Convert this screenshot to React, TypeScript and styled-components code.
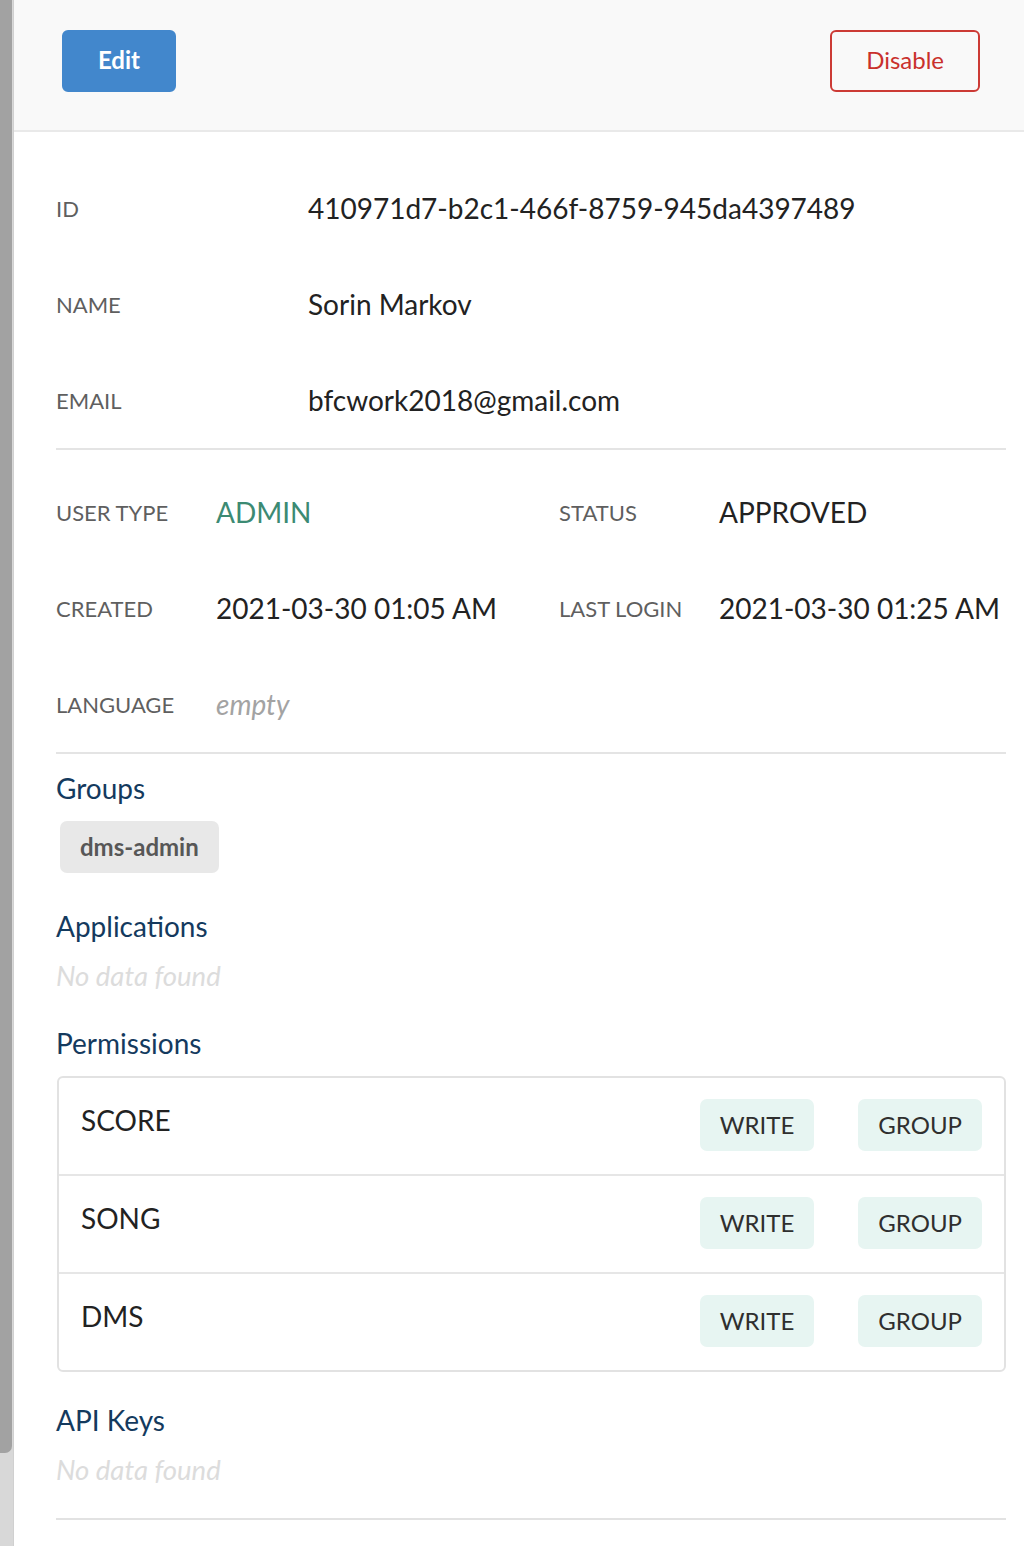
import styled, { createGlobalStyle } from 'styled-components'

const GlobalStyle = createGlobalStyle`
  html, body {
    margin: 0;
    padding: 0;
    background: #ffffff;
    font-family: Lato, "Open Sans", "Liberation Sans", sans-serif;
  }
  * { box-sizing: border-box; }
`

const Page = styled.div`
  display: flex;
  min-height: 1546px;
`

const Track = styled.div`
  position: relative;
  flex: 0 0 14px;
  background: #d8d8d8;
  border-right: 1px solid #d0d0d0;
`

const Thumb = styled.div`
  position: absolute;
  top: 0;
  left: 0;
  width: 12px;
  height: 1453px;
  background: #a2a2a2;
  border-bottom-right-radius: 7px;
`

const Main = styled.div`
  flex: 1;
  min-width: 0;
`

const Toolbar = styled.header`
  display: flex;
  justify-content: space-between;
  align-items: flex-start;
  height: 132px;
  padding: 30px 44px 0 48px;
  background: #f9f9f9;
  border-bottom: 2px solid #e9e9e9;
`

const Button = styled.button<{ $variant: 'primary' | 'danger' }>`
  height: 62px;
  padding: 0 34px 3px;
  border-radius: 6px;
  font-family: inherit;
  font-size: 24px;
  line-height: 1;
  cursor: pointer;
  font-weight: ${({ $variant }) => ($variant === 'primary' ? 700 : 400)};
  background: ${({ $variant }) => ($variant === 'primary' ? '#4287cc' : 'transparent')};
  color: ${({ $variant }) => ($variant === 'primary' ? '#ffffff' : '#c9302c')};
  border: 2px solid ${({ $variant }) => ($variant === 'primary' ? '#4287cc' : '#cc3a35')};
`

const Content = styled.div`
  padding: 0 18px 0 42px;
`

const InfoBlock = styled.section<{ $top: number }>`
  padding-top: ${({ $top }) => $top}px;
  border-bottom: 2px solid #e4e4e4;
`

const MainGrid = styled.div`
  display: grid;
  grid-template-columns: 252px 1fr;
  grid-auto-rows: 96px;
  align-items: center;
`

const PairGrid = styled.div`
  display: grid;
  grid-template-columns: 160px 343px 160px 1fr;
  grid-auto-rows: 96px;
  align-items: center;
`

const Label = styled.div`
  font-size: 22px;
  color: #5f5f5f;
  text-transform: uppercase;
  white-space: nowrap;
`

const Value = styled.div<{ $tone?: 'default' | 'accent' | 'muted' }>`
  font-size: 28px;
  white-space: nowrap;
  font-style: ${({ $tone }) => ($tone === 'muted' ? 'italic' : 'normal')};
  color: ${({ $tone }) =>
    $tone === 'accent' ? '#3c8a73' : $tone === 'muted' ? '#a3a3a3' : '#222222'};
`

const Section = styled.section<{ $top: number }>`
  padding-top: ${({ $top }) => $top}px;
`

const Heading = styled.h2`
  margin: 0 0 16px;
  font-size: 28px;
  line-height: 34px;
  font-weight: 400;
  color: #143a5e;
`

const Tag = styled.span`
  display: inline-flex;
  align-items: center;
  height: 52px;
  margin-left: 4px;
  padding: 0 20px 2px;
  border-radius: 7px;
  background: #e8e8e8;
  color: #575757;
  font-size: 24px;
  font-weight: 700;
`

const Empty = styled.div`
  font-size: 27.5px;
  line-height: 34px;
  font-style: italic;
  color: #dcdcdc;
`

const Table = styled.div`
  margin-left: 1px;
  border: 2px solid #e2e2e2;
  border-radius: 6px;
`

const PermRow = styled.div`
  display: flex;
  align-items: flex-start;
  height: 96px;
  padding: 21px 22px 0 22px;
  & + & {
    height: 98px;
    border-top: 2px solid #e6e6e6;
  }
`

const PermName = styled.div`
  flex: 1;
  font-size: 28px;
  line-height: 42px;
  color: #222222;
`

const Chips = styled.div`
  display: flex;
  gap: 44px;
`

const Chip = styled.span`
  display: inline-flex;
  align-items: center;
  height: 52px;
  padding: 0 20px 1px;
  border-radius: 7px;
  background: #e7f5f2;
  color: #2f2f2f;
  font-size: 24px;
`

const Divider = styled.hr`
  margin: 31px 0 0;
  border: 0;
  border-top: 2px solid #e2e2e2;
`

const permissions = ['SCORE', 'SONG', 'DMS']

export default function App() {
  return (
    <Page>
      <GlobalStyle />
      <Track>
        <Thumb />
      </Track>
      <Main>
        <Toolbar>
          <Button $variant="primary">Edit</Button>
          <Button $variant="danger">Disable</Button>
        </Toolbar>
        <Content>
          <InfoBlock $top={28}>
            <MainGrid>
              <Label>ID</Label>
              <Value>410971d7-b2c1-466f-8759-945da4397489</Value>
              <Label>Name</Label>
              <Value>Sorin Markov</Value>
              <Label>Email</Label>
              <Value>bfcwork2018@gmail.com</Value>
            </MainGrid>
          </InfoBlock>
          <InfoBlock $top={14}>
            <PairGrid>
              <Label>User type</Label>
              <Value $tone="accent">ADMIN</Value>
              <Label>Status</Label>
              <Value>APPROVED</Value>
              <Label>Created</Label>
              <Value>2021-03-30 01:05 AM</Value>
              <Label>Last login</Label>
              <Value>2021-03-30 01:25 AM</Value>
              <Label>Language</Label>
              <Value $tone="muted">empty</Value>
            </PairGrid>
          </InfoBlock>
          <Section $top={17}>
            <Heading>Groups</Heading>
            <Tag>dms-admin</Tag>
          </Section>
          <Section $top={36}>
            <Heading>Applications</Heading>
            <Empty>No data found</Empty>
          </Section>
          <Section $top={33}>
            <Heading>Permissions</Heading>
            <Table>
              {permissions.map((name) => (
                <PermRow key={name}>
                  <PermName>{name}</PermName>
                  <Chips>
                    <Chip>WRITE</Chip>
                    <Chip>GROUP</Chip>
                  </Chips>
                </PermRow>
              ))}
            </Table>
          </Section>
          <Section $top={31}>
            <Heading>API Keys</Heading>
            <Empty>No data found</Empty>
          </Section>
          <Divider />
        </Content>
      </Main>
    </Page>
  )
}
